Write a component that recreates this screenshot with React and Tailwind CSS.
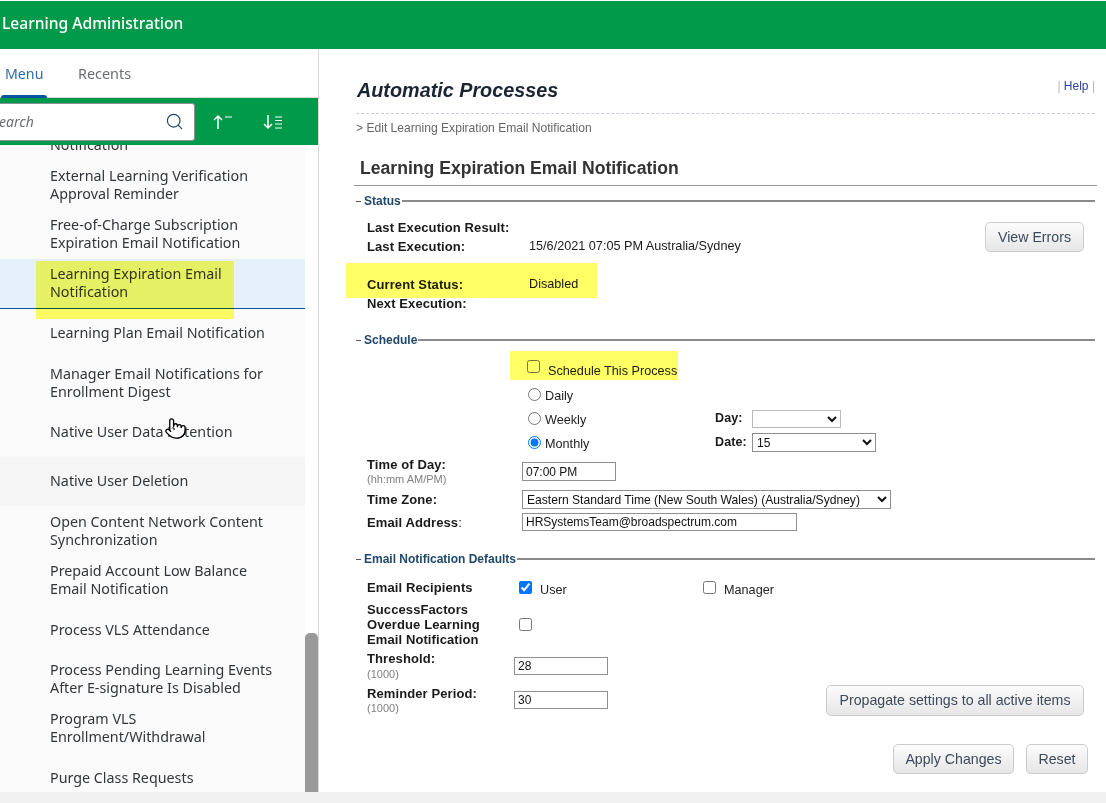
import React from "react";
import { Pointer, Search } from "lucide-react";

const menuItems = [
  ["Notification"],
  ["External Learning Verification", "Approval Reminder"],
  ["Free-of-Charge Subscription", "Expiration Email Notification"],
  ["Learning Expiration Email", "Notification"],
  ["Learning Plan Email Notification"],
  ["Manager Email Notifications for", "Enrollment Digest"],
  ["Native User Data Retention"],
  ["Native User Deletion"],
  ["Open Content Network Content", "Synchronization"],
  ["Prepaid Account Low Balance", "Email Notification"],
  ["Process VLS Attendance"],
  ["Process Pending Learning Events", "After E-signature Is Disabled"],
  ["Program VLS", "Enrollment/Withdrawal"],
  ["Purge Class Requests"],
];

const Highlight = ({ className }) => (
  <div className={`absolute bg-[#ffff66] mix-blend-multiply pointer-events-none ${className}`} />
);

const MenuItem = ({ lines }) => {
  const selected = lines[0] === "Learning Expiration Email";
  const hovered = lines[0] === "Native User Deletion";
  let bg = "";
  if (selected) bg = "bg-[#e5f0fa] border-b border-[#0854a0]";
  if (hovered) bg = "bg-[#f5f5f5]";
  if (lines[0] === "Notification") bg = "pt-[18px]"; // second line of an item scrolled off the top
  return (
    <div className={`relative h-[49.4px] pl-[50px] flex flex-col justify-center ${bg}`}>
      {lines.map((line) => (
        <div key={line} className="text-[14.3px] leading-[18px] text-[#32363a] whitespace-nowrap">
          {line}
        </div>
      ))}
      {selected && <Highlight className="left-[36px] top-[2px] w-[198px] h-[58px] z-10" />}
    </div>
  );
};

const Sidebar = () => (
  <aside className="w-[319px] shrink-0 border-r border-[#d9d9d9] flex flex-col font-['Noto_Sans',sans-serif]">
    {/* Tabs */}
    <div className="h-[49px] shrink-0 border-b border-[#d9d9d9] flex">
      <div className="relative w-[46px] ml-[1px] pl-[4px] pt-[15px] text-[14.2px] leading-[20px] text-[#2f6ba8]">
        Menu
        <div className="absolute left-0 right-0 bottom-[-1px] h-[3px] rounded-t-[3px] bg-[#0854a0]" />
      </div>
      <div className="ml-[31px] pt-[15px] text-[14.4px] leading-[20px] text-[#6a6d70]">Recents</div>
    </div>

    {/* Search bar */}
    <div className="h-[47px] shrink-0 bg-[#009a4a] flex items-center">
      <div className="w-[195px] h-[38px] bg-white border border-l-0 border-[#89919a] rounded-r-[3px] overflow-hidden flex items-center justify-between pr-[10px]">
        <span className="-ml-[8px] text-[14px] italic text-[#6a6d70]">Search</span>
        <Search size={19} strokeWidth={1.5} className="text-[#22476b]" />
      </div>
      <svg width="20" height="16" viewBox="0 0 20 16" className="ml-[18px]" fill="none" stroke="white" strokeWidth="1.5">
        <path d="M5 15V2M1 6l4-4 4 4" />
        <path d="M12 3h7" strokeWidth="1" />
      </svg>
      <svg width="20" height="16" viewBox="0 0 20 16" className="ml-[30px]" fill="none" stroke="white" strokeWidth="1.5">
        <path d="M5 1v13M1 10l4 4 4-4" />
        <path d="M12 3h7M12 6.5h7M12 10h7M12 14h7" strokeWidth="1" />
      </svg>
    </div>

    {/* Menu list */}
    <div className="flex-1 min-h-0 flex">
      <div className="relative flex-1 bg-[#fafafa] overflow-hidden">
        <div className="-mt-[34px]">
          {menuItems.map((lines) => (
            <MenuItem key={lines[0]} lines={lines} />
          ))}
        </div>
        <Pointer size={23} strokeWidth={1.4} fill="white" className="absolute left-[164px] top-[272px] text-black" />
      </div>
      <div className="w-[13px] shrink-0 bg-white pt-[488px]">
        <div className="h-[159px] rounded-t-[5px] bg-[#999999]" />
      </div>
    </div>
  </aside>
);

const SectionHeader = ({ title, className = "" }) => (
  <div className={`h-[16px] mr-[2px] flex items-center ${className}`}>
    <div className="ml-[2px] w-[5px] h-px bg-[#555]" />
    <span className="ml-[3px] mr-[1px] text-[12px] font-bold text-[#20486a] whitespace-nowrap">{title}</span>
    <div className="flex-1 h-[2px] bg-[#8a8a8a]" />
  </div>
);

const StatusRow = ({ label, value, highlight }) => (
  <div className="relative h-[19px] pl-[13px] flex items-center text-[12.67px] text-[#1a1a1a]">
    <span className="w-[162px] font-bold text-[13px] tracking-[0.1px]">{label}</span>
    {value && <span>{value}</span>}
    {highlight && <Highlight className="-left-[8px] -top-[12px] w-[251px] h-[35px]" />}
  </div>
);

const GreyButton = ({ children, className = "" }) => (
  <button
    type="button"
    className={`border border-[#cccccc] rounded-[5px] bg-gradient-to-b from-[#fcfcfc] to-[#e6e6e6] text-[14.2px] text-[#3d4a5c] ${className}`}
  >
    {children}
  </button>
);

const TextField = ({ value, className = "" }) => (
  <input
    type="text"
    readOnly
    value={value}
    className={`border border-[#8f8f8f] px-[3px] text-[12px] text-[#111] bg-white outline-none ${className}`}
  />
);

const Radio = ({ label, checked, children }) => (
  <div className="h-[24.4px] pl-[174px] flex items-center text-[12.67px] text-[#222]">
    <div className="w-[187px] flex items-center">
      <input type="radio" name="freq" readOnly checked={!!checked} className="w-[13px] h-[13px] m-0" />
      <span className="ml-[4px] mt-[4px]">{label}</span>
    </div>
    {children}
  </div>
);

const BoldLabel = ({ children, className = "" }) => (
  <div className={`text-[13px] leading-[15px] font-bold tracking-[0.1px] text-[#1a1a1a] ${className}`}>{children}</div>
);

const Note = ({ children, className = "" }) => (
  <div className={`text-[11px] leading-[13px] text-[#808080] ${className}`}>{children}</div>
);

const FormSelect = ({ value, className = "" }) => (
  <select
    value={value}
    onChange={() => {}}
    className={`border border-[#8f8f8f] text-[12.1px] text-[#111] bg-white ${className}`}
  >
    <option value={value}>{value}</option>
  </select>
);

const Main = () => (
  <main className="flex-1 min-w-0 pl-[35px] pr-[9px]">
    <div className="mx-[2px] h-[65px] pt-[29px] border-b border-dashed border-[#c5cdd6] flex justify-between">
      <h1 className="ml-px text-[19.8px] leading-[24px] font-bold italic text-[#1a2433]">Automatic Processes</h1>
      <div className="text-[12px] leading-[16px] text-[#b5b5b5] whitespace-nowrap">
        | <span className="text-[#2a3f9e]">Help</span> |
      </div>
    </div>
    <div className="pl-[2px] h-[28px] text-[12.1px] leading-[28px] text-[#666]">&gt; Edit Learning Expiration Email Notification</div>
    <h2 className="h-[44px] pl-[6px] pt-[14px] border-b border-[#999] text-[17.6px] leading-[24px] font-bold text-[#333]">
      Learning Expiration Email Notification
    </h2>

    {/* Status */}
    <SectionHeader title="Status" className="mt-[7px]" />
    <div className="relative mt-[9px]">
      <StatusRow label="Last Execution Result:" />
      <StatusRow label="Last Execution:" value="15/6/2021 07:05 PM Australia/Sydney" />
      <div className="h-[19px]" />
      <StatusRow label="Current Status:" value="Disabled" highlight />
      <StatusRow label="Next Execution:" />
      <GreyButton className="absolute right-[13px] top-[4px] w-[99px] h-[30px] pt-px">View Errors</GreyButton>
    </div>

    {/* Schedule */}
    <SectionHeader title="Schedule" className="mt-[19px]" />
    <div className="relative mt-[3px] h-[31px] pl-[173px] flex items-center text-[12.67px] text-[#222]">
      <input type="checkbox" readOnly checked={false} className="w-[13px] h-[13px] m-0" />
      <span className="ml-[8px] mt-[9px]">Schedule This Process</span>
      <Highlight className="left-[156px] top-0 w-[168px] h-[29px]" />
    </div>
    <Radio label="Daily" />
    <Radio label="Weekly">
      <BoldLabel className="w-[37px] !text-[12.5px]">Day:</BoldLabel>
      <FormSelect value="" className="w-[89px] h-[18px] !border-[#bbb]" />
    </Radio>
    <Radio label="Monthly" checked>
      <BoldLabel className="w-[37px] !text-[12.5px]">Date:</BoldLabel>
      <FormSelect value="15" className="w-[124px] h-[19px]" />
    </Radio>

    <div className="pl-[13px] mt-[2px] h-[30px] flex">
      <div className="w-[155px]">
        <BoldLabel>Time of Day:</BoldLabel>
        <Note className="mt-[1px]">(hh:mm AM/PM)</Note>
      </div>
      <TextField value="07:00 PM" className="w-[94px] h-[19px] mt-[5px]" />
    </div>
    <div className="pl-[13px] mt-[3px] h-[19px] flex items-center">
      <BoldLabel className="w-[155px]">Time Zone:</BoldLabel>
      <FormSelect value="Eastern Standard Time (New South Wales) (Australia/Sydney)" className="w-[369px] h-[19px]" />
    </div>
    <div className="pl-[13px] mt-[4px] h-[18px] flex items-center">
      <BoldLabel className="w-[155px]">
        Email Address<span className="font-normal">:</span>
      </BoldLabel>
      <TextField value="HRSystemsTeam@broadspectrum.com" className="w-[275px] h-[18px]" />
    </div>

    {/* Email defaults */}
    <SectionHeader title="Email Notification Defaults" className="mt-[20px]" />
    <div className="pl-[13px] mt-[11px] h-[18px] flex items-center text-[12.67px] text-[#222]">
      <BoldLabel className="w-[152px]">Email Recipients</BoldLabel>
      <input type="checkbox" readOnly checked className="w-[13px] h-[13px] m-0" />
      <span className="ml-[8px] w-[163px] mt-[7px]">User</span>
      <input type="checkbox" readOnly checked={false} className="w-[13px] h-[13px] m-0" />
      <span className="ml-[8px] mt-[7px]">Manager</span>
    </div>
    <div className="pl-[13px] mt-[6px] h-[45px] flex items-center">
      <BoldLabel className="w-[152px]">
        SuccessFactors
        <br />
        Overdue Learning
        <br />
        Email Notification
      </BoldLabel>
      <input type="checkbox" readOnly checked={false} className="w-[13px] h-[13px] m-0" />
    </div>
    <div className="pl-[13px] mt-[5px] h-[33px] flex">
      <div className="w-[147px] -mt-[1px]">
        <BoldLabel>Threshold:</BoldLabel>
        <Note className="mt-[2px]">(1000)</Note>
      </div>
      <TextField value="28" className="w-[94px] h-[18px] mt-[5px]" />
    </div>
    <div className="pl-[13px] h-[31px] flex justify-between">
      <div className="flex">
        <div className="w-[147px] mt-[1px]">
          <BoldLabel>Reminder Period:</BoldLabel>
          <Note className="mt-[1px]">(1000)</Note>
        </div>
        <TextField value="30" className="w-[94px] h-[18px] mt-[6px]" />
      </div>
      <GreyButton className="w-[258px] h-[31px] mr-[13px]">Propagate settings to all active items</GreyButton>
    </div>

    <div className="mt-[28px] pr-[9px] flex justify-end gap-[12px]">
      <GreyButton className="w-[121px] h-[30px]">Apply Changes</GreyButton>
      <GreyButton className="w-[62px] h-[30px]">Reset</GreyButton>
    </div>
  </main>
);

const App = () => {
  return (
    <div className="h-[803px] overflow-hidden bg-white pt-px flex flex-col font-['Liberation_Sans',Arial,sans-serif]">
      <header className="h-[48px] shrink-0 bg-[#009a4a] pl-[2px] pb-[2px] flex items-center text-[15.6px] font-medium text-white font-['Noto_Sans',sans-serif]">
        Learning Administration
      </header>
      <div className="flex-1 min-h-0 flex">
        <Sidebar />
        <Main />
      </div>
      <div className="h-[11px] shrink-0 bg-[#f0f0f0]" />
    </div>
  );
};

export default App;
